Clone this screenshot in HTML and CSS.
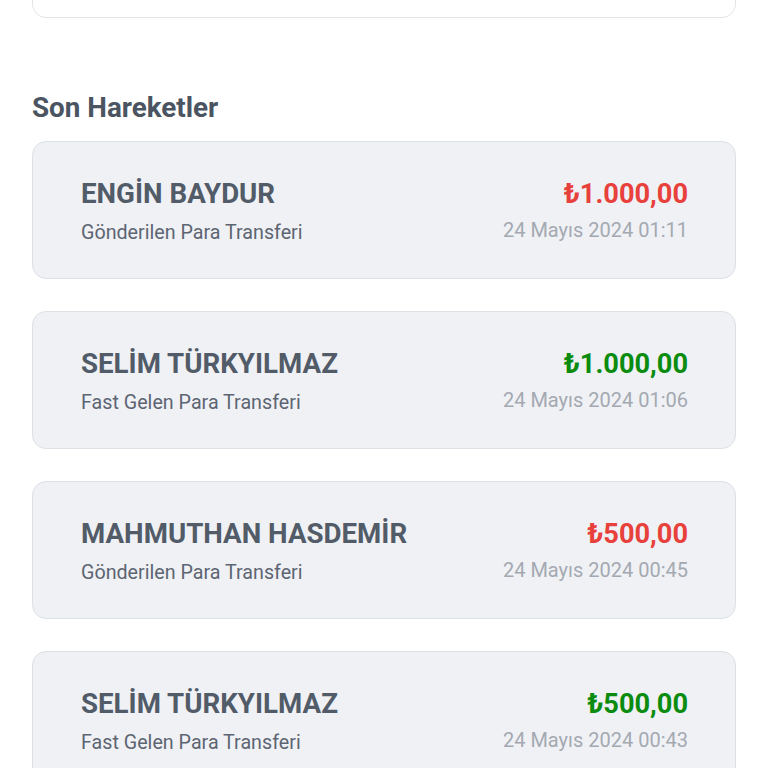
FILE: index.html
```html
<!DOCTYPE html>
<html lang="tr">
<head>
    <meta charset="UTF-8">
    <meta name="viewport" content="width=device-width, initial-scale=1.0">
    <title>Son Hareketler</title>
    <link rel="stylesheet" href="styles.css">
</head>
<body>
    <div class="page">
        <!-- Balance card (scrolled off the top) -->
        <div class="top-card"></div>

        <h2 class="section-title">Son Hareketler</h2>

        <!-- Transactions -->
        <div class="tx-list">
            <div class="tx-card">
                <div class="tx-left">
                    <div class="tx-name">ENGİN BAYDUR</div>
                    <div class="tx-type">Gönderilen Para Transferi</div>
                </div>
                <div class="tx-right">
                    <div class="tx-amount out">₺1.000,00</div>
                    <div class="tx-date">24 Mayıs 2024 01:11</div>
                </div>
            </div>

            <div class="tx-card">
                <div class="tx-left">
                    <div class="tx-name">SELİM TÜRKYILMAZ</div>
                    <div class="tx-type">Fast Gelen Para Transferi</div>
                </div>
                <div class="tx-right">
                    <div class="tx-amount in">₺1.000,00</div>
                    <div class="tx-date">24 Mayıs 2024 01:06</div>
                </div>
            </div>

            <div class="tx-card">
                <div class="tx-left">
                    <div class="tx-name">MAHMUTHAN HASDEMİR</div>
                    <div class="tx-type">Gönderilen Para Transferi</div>
                </div>
                <div class="tx-right">
                    <div class="tx-amount out">₺500,00</div>
                    <div class="tx-date">24 Mayıs 2024 00:45</div>
                </div>
            </div>

            <div class="tx-card">
                <div class="tx-left">
                    <div class="tx-name">SELİM TÜRKYILMAZ</div>
                    <div class="tx-type">Fast Gelen Para Transferi</div>
                </div>
                <div class="tx-right">
                    <div class="tx-amount in">₺500,00</div>
                    <div class="tx-date">24 Mayıs 2024 00:43</div>
                </div>
            </div>
        </div>
    </div>
</body>
</html>
```

FILE: styles.css
```css
/* Overall layout */
body {
    margin: 0;
    background: #ffffff;
    font-family: Roboto, "Noto Sans", Arial, sans-serif;
    overflow: hidden;
}

.page {
    padding: 0 32px;
}

/* Card above the list, mostly out of view */
.top-card {
    margin-top: -82px;
    height: 98px;
    background: #ffffff;
    border: 1px solid #e2e4e8;
    border-radius: 14px;
}

.section-title {
    margin: 73px 0 16px;
    font-size: 27.8px;
    line-height: 34px;
    font-weight: 700;
    color: #4b5461;
}

/* Transaction cards */
.tx-list {
    display: flex;
    flex-direction: column;
    gap: 32px;
}

.tx-card {
    display: flex;
    justify-content: space-between;
    align-items: flex-start;
    padding: 35px 47px 32px 48px;
    background: #eff1f5;
    border: 1px solid #dde0e5;
    border-radius: 14px;
}

.tx-left,
.tx-right {
    display: flex;
    flex-direction: column;
}

.tx-right {
    align-items: flex-end;
}

.tx-name {
    font-size: 27.7px;
    line-height: 34px;
    font-weight: 700;
    color: #525b68;
}

.tx-type {
    margin-top: 9px;
    font-size: 19.7px;
    line-height: 26px;
    color: #5d6572;
}

.tx-amount {
    font-size: 27.2px;
    line-height: 34px;
    font-weight: 700;
}

.tx-amount.out {
    color: #e8403b;
}

.tx-amount.in {
    color: #0b8c0f;
}

.tx-date {
    margin-top: 6px;
    font-size: 20px;
    line-height: 26px;
    color: #a4a9b1;
}
```
